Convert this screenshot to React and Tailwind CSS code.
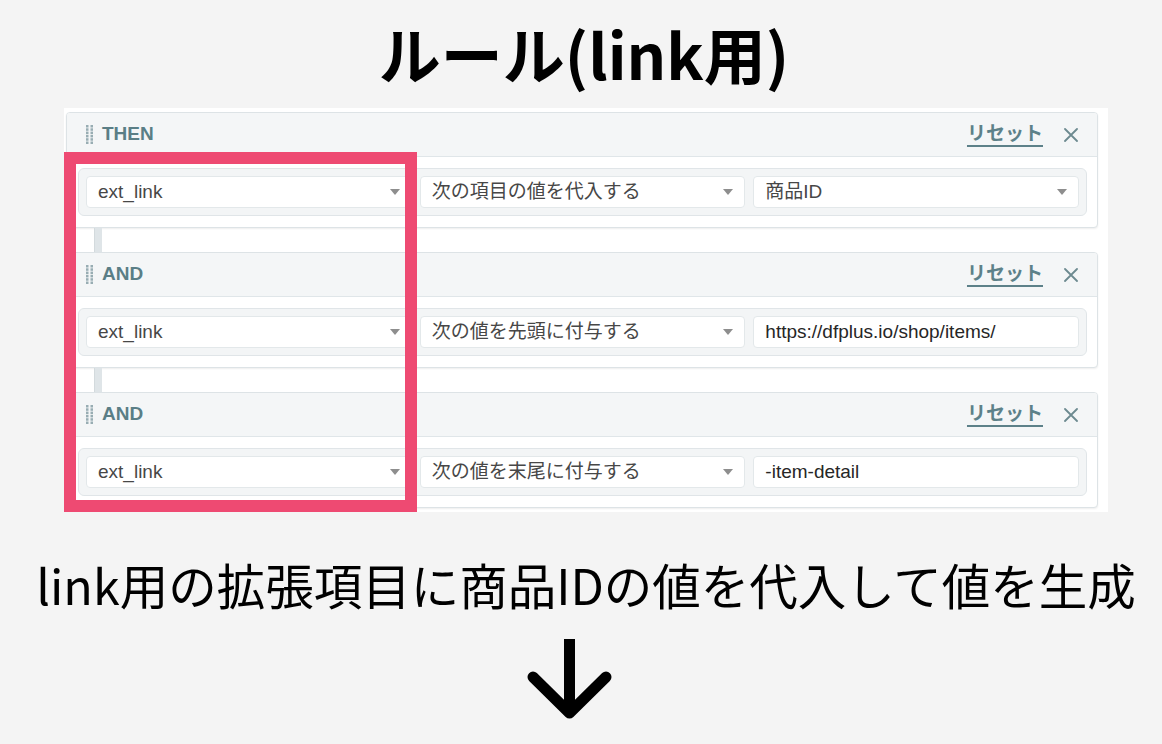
import React from 'react';

const uiFont = { fontFamily: '"Liberation Sans", "Noto Sans CJK JP", sans-serif' };
const jpFont = { fontFamily: '"Noto Sans CJK JP", "Noto Sans", sans-serif' };

function Grip() {
    const dots = [];
    for (let r = 0; r < 6; r++) {
        for (let c = 0; c < 2; c++) {
            dots.push(<rect key={`${r}-${c}`} x={c * 4.5} y={r * 3.3} width="2.5" height="2.5" fill="#98adb3" />);
        }
    }
    return (
        <svg width="7" height="19" viewBox="0 0 7 19" className="shrink-0">
            {dots}
        </svg>
    );
}

function Caret() {
    return (
        <svg width="10" height="6" viewBox="0 0 10 6" className="ml-auto shrink-0">
            <path d="M0 0 H10 L5 6 Z" fill="#8e8e8e" />
        </svg>
    );
}

function Field({ text, input }) {
    return (
        <div className={`flex-1 h-[32px] bg-white border border-[#e3e8ea] rounded-[4px] flex items-center pl-[11px] pr-[11px] text-[19px] ${input ? 'text-[#262626]' : 'text-[#474747]'}`}>
            <span className="whitespace-nowrap">{text}</span>
            {!input && <Caret />}
        </div>
    );
}

function RuleCard({ label, field, op, value, input }) {
    return (
        <div className="rounded-[4px] border border-[#dde3e6] bg-white shadow-[0_1px_2px_rgba(0,0,0,0.07)] overflow-hidden">
            {/* header */}
            <div className="h-[44px] flex items-center bg-[#f4f6f7] border-b border-[#e0e6e9] pl-[19px] pr-[19px]">
                <Grip />
                <span className="ml-[9px] text-[19px] font-bold text-[#5a7e86]">{label}</span>
                <span className="ml-auto text-[19px] font-bold text-[#5d8189] underline underline-offset-[5px] decoration-[1.5px]">リセット</span>
                <svg width="14" height="14" viewBox="0 0 14 14" className="ml-[21px]">
                    <path d="M1 1 L13 13 M13 1 L1 13" stroke="#6d8a90" strokeWidth="1.8" strokeLinecap="round" />
                </svg>
            </div>
            {/* condition row */}
            <div className="pt-[11px] pb-[11px] pl-[11px] pr-[10px]">
                <div className="flex gap-[8px] p-[7px] rounded-[6px] border border-[#e0e5e8] bg-[#f3f5f6]">
                    <Field text={field} />
                    <Field text={op} />
                    <Field text={value} input={input} />
                </div>
            </div>
        </div>
    );
}

function Connector() {
    return (
        <div className="h-[24px]">
            <div className="ml-[28px] w-[8px] h-full bg-[#dfe5e8] border-l border-[#d3dadd]"></div>
        </div>
    );
}

export default function App() {
    return (
        <div className="w-[1162px] h-[744px] bg-[#f4f4f4] flex flex-col overflow-hidden">
            {/* title */}
            <div className="h-[108px] flex items-center justify-center pb-[2px] pl-[6px]" style={jpFont}>
                <h1 className="text-[62px] font-bold leading-none text-black">ルール(link用)</h1>
            </div>

            {/* screenshot panel */}
            <div className="relative ml-[64px] w-[1044px] h-[404px] bg-white pt-[4px] pl-[2px] pr-[10px]" style={uiFont}>
                <RuleCard label="THEN" field="ext_link" op="次の項目の値を代入する" value="商品ID" />
                <Connector />
                <RuleCard label="AND" field="ext_link" op="次の値を先頭に付与する" value="https://dfplus.io/shop/items/" input />
                <Connector />
                <RuleCard label="AND" field="ext_link" op="次の値を末尾に付与する" value="-item-detail" input />

                {/* highlight */}
                <div className="absolute left-0 top-[44px] w-[353px] h-[360px] border-[12px] border-[#ee4a72]"></div>
            </div>

            {/* caption */}
            <div className="mt-[46px] flex justify-center pl-[10px]" style={jpFont}>
                <p className="text-[48.5px] leading-[52px] text-black whitespace-nowrap">link用の拡張項目に商品IDの値を代入して値を生成</p>
            </div>

            {/* arrow */}
            <div className="mt-[29px] pl-[519px]">
                <svg width="100" height="90" viewBox="0 0 100 90">
                    <path d="M50.5 0 V 74" stroke="#000" strokeWidth="11" />
                    <path d="M14 38 L50.5 74 L87 38" stroke="#000" strokeWidth="11" fill="none" strokeLinecap="round" strokeLinejoin="round" />
                </svg>
            </div>
        </div>
    );
}
